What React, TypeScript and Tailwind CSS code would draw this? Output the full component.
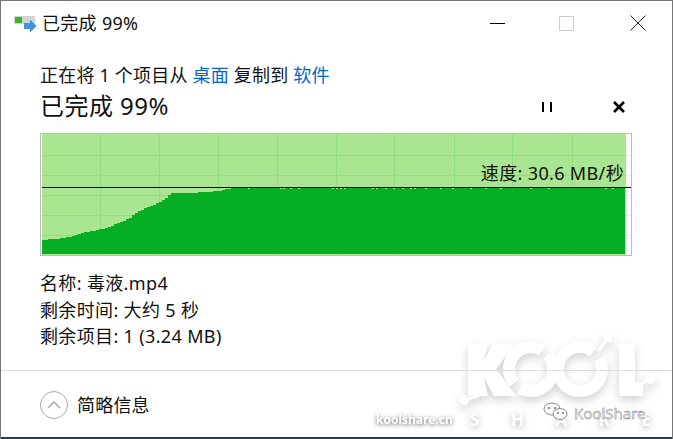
import React from 'react'

const font = { fontFamily: '"Noto Sans", "Noto Sans CJK SC", sans-serif' }

const curve = [
  [42, 240], [52, 239], [63, 238], [72, 236], [80, 233], [92, 231], [105, 228], [115, 224], [122, 221],
  [130, 217], [135, 213], [140, 210], [150, 206], [160, 201], [166, 197], [170, 193], [190, 193],
  [205, 192], [220, 191], [226, 189], [232, 188], [625, 188],
]

// the graph is drawn in small steps, as the copy dialog does
function stepped() {
  const pts: string[] = []
  for (let x = 42; x < 625; x += 3) {
    let y = 188
    for (let i = 0; i < curve.length - 1; i++) {
      const [x0, y0] = curve[i]
      const [x1, y1] = curve[i + 1]
      if (x >= x0 && x <= x1) y = Math.round(y0 + ((y1 - y0) * (x - x0)) / (x1 - x0))
    }
    pts.push(`${x - 41},${y - 134} ${Math.min(x + 3, 625) - 41},${y - 134}`)
  }
  return pts.join(' ') + ' 584,120 1,120'
}

const notches = [248, 280, 283, 290, 298, 332, 336, 340, 344, 372, 376, 385, 393, 402, 410, 414, 425, 440, 452, 470, 485, 500, 530, 548, 605, 612]

function Chart() {
  const vx = [100, 159, 218, 277, 336, 394, 454, 512, 572]
  const hy = [155, 175, 195, 215, 235]
  return (
    <div className="relative mt-[10px] h-[123px] w-[592px] border border-[#bcbcbc] bg-white">
      <svg width="590" height="121" className="block" shapeRendering="crispEdges">
        <rect x="1" y="0" width="584" height="121" fill="#aae691" />
        {hy.map((y) => (
          <g key={y}>
            <rect x="1" y={y - 134} width="584" height="1" fill="#8fdf7c" />
            <rect x="585" y={y - 134} width="5" height="1" fill="#e6f5e0" />
          </g>
        ))}
        {vx.map((x) => (
          <rect key={x} x={x - 41} y="0" width="1" height="121" fill="#8fdf7c" />
        ))}
        <polygon points={stepped()} fill="#06ae24" />
        {notches.map((x) => (
          <rect key={x} x={x - 41} y="54" width="2" height="1" fill="#aae691" />
        ))}
        <rect x="1" y="53" width="589" height="1" fill="#000" />
      </svg>
      <span className="absolute right-[7px] top-[27px] text-[18px] leading-[24px] tracking-[0.35px] text-[#111]">速度: 30.6 MB/秒</span>
    </div>
  )
}

function Watermark() {
  return (
    <>
      <svg width="673" height="439" className="absolute left-0 top-0 drop-shadow-[0_4px_5px_rgba(0,0,0,0.18)]">
        <path d="M467 343h20l-6 24 6 28h-20z" fill="#fff" />
        <path d="M492 343h22l-19 25 20 27h-22l-15-27z" fill="#fff" />
        <path d="M478 395l-15 4" stroke="#fff" strokeWidth="3" />
        <circle cx="463" cy="399" r="5" fill="#fff" />
        <circle cx="530" cy="368" r="22" fill="none" stroke="#fff" strokeWidth="12" strokeDasharray="61 8" transform="rotate(-40 530 368)" />
        <circle cx="579" cy="368" r="22" fill="none" stroke="#fff" strokeWidth="12" strokeDasharray="128 10" transform="rotate(-28 579 368)" />
        <path d="M597 350l10-13" stroke="#fff" strokeWidth="3" />
        <circle cx="607" cy="337" r="5" fill="#fff" />
        <path d="M618 343h16v38h8v14h-24z" fill="#fff" />
        <path d="M642 382l8-4" stroke="#fff" strokeWidth="3" />
        <circle cx="650" cy="378" r="5" fill="#fff" />
      </svg>
      <div className="absolute left-0 top-0 h-full w-full text-white">
        <span className="absolute left-[375px] top-[412px] text-[12px] font-bold leading-[14px] drop-shadow-[0_1px_2px_rgba(0,0,0,0.6)]">koolshare.cn</span>
        <div className="absolute left-[469px] top-[412px] flex w-[181px] justify-between text-[17px] font-bold leading-[13px] drop-shadow-[0_2px_3px_rgba(0,0,0,0.3)]">
          <span>S</span>
          <span>H</span>
          <span>A</span>
          <span>R</span>
          <span>E</span>
        </div>
        <svg width="26" height="20" className="absolute left-[542px] top-[401px]" fill="#fff" stroke="#888" strokeWidth="1">
          <ellipse cx="9" cy="7" rx="8" ry="6" />
          <ellipse cx="17" cy="12" rx="7" ry="5.5" />
          <circle cx="6" cy="6" r="0.8" fill="#666" />
          <circle cx="12" cy="6" r="0.8" fill="#666" />
          <circle cx="15" cy="11" r="0.7" fill="#666" />
          <circle cx="20" cy="11" r="0.7" fill="#666" />
        </svg>
        <span className="absolute left-[573px] top-[402px] text-[15px] leading-[20px] text-[#f4f4f4] [-webkit-text-stroke:0.35px_#555]">KoolShare</span>
      </div>
    </>
  )
}

export default function App() {
  return (
    <div style={font} className="relative flex h-[439px] w-[673px] flex-col overflow-hidden border-t border-l border-r border-[#777] bg-white text-[#111]">
      <div className="flex h-[44px] shrink-0 items-center">
        <svg width="24" height="20" viewBox="0 0 24 20" className="ml-[12px]" shapeRendering="crispEdges">
          <rect x="1" y="3" width="21" height="8" fill="#d4d4d4" />
          <rect x="2" y="4" width="7" height="6" fill="#37b52f" />
          <path d="M11 10h6V7l6 6-6 6v-3h-6z" fill="#3f94e2" />
        </svg>
        <span className="ml-[5px] text-[18px] leading-none tracking-[0.3px]">已完成 99%</span>
        <div className="ml-auto flex items-center">
          <div className="mr-[54px] h-px w-[15px] bg-black" />
          <div className="mr-[56px] h-[15px] w-[15px] border border-[#ccc]" />
          <svg width="16" height="16" className="mr-[26px]" stroke="#222" strokeWidth="1">
            <path d="M.5.5l15 15M15.5.5l-15 15" />
          </svg>
        </div>
      </div>

      <div className="flex flex-1 flex-col pl-[39px]">
        <p className="mt-[18px] text-[18px] leading-[24px] tracking-[0.2px]">
          正在将 1 个项目从 <span className="text-[#0066cc]">桌面</span> 复制到 <span className="text-[#0066cc]">软件</span>
        </p>
        <div className="mt-[2px] flex h-[34px] items-center">
          <span className="w-[500px] text-[24px] leading-none tracking-[0.45px]">已完成 99%</span>
          <svg width="12" height="12" className="mt-[2px] ml-[1px]" shapeRendering="crispEdges">
            <rect x="1" y="1" width="2" height="10" fill="#000" />
            <rect x="9" y="1" width="2" height="10" fill="#000" />
          </svg>
          <svg width="14" height="14" className="mt-[2px] ml-[59px]" stroke="#000" strokeWidth="2.6">
            <path d="M2 2l10 10M12 2L2 12" />
          </svg>
        </div>
        <Chart />
        <div className="mt-[14px] text-[18px] leading-[26.5px] tracking-[0.35px]">
          <p>名称: 毒液.mp4</p>
          <p>剩余时间: 大约 5 秒</p>
          <p>剩余项目: 1 (3.24 MB)</p>
        </div>
      </div>

      <Watermark />

      <div className="relative z-10 flex h-[69px] shrink-0 items-center border-t border-[#dfdfdf] pl-[39px]">
        <div className="flex h-[28px] w-[28px] items-center justify-center rounded-full border border-[#aaa]">
          <svg width="14" height="8" fill="none" stroke="#aaa" strokeWidth="1.5">
            <path d="M1 7l6-6 6 6" />
          </svg>
        </div>
        <span className="ml-[9px] text-[18px] tracking-[0.2px]">简略信息</span>
      </div>

      <div className="absolute bottom-0 left-0 z-20 h-[2px] w-full bg-[#21404a]" />
      <div className="absolute bottom-0 left-[-1px] z-20 h-[144px] w-px bg-[#21404a]" />
      <div className="absolute bottom-0 right-[-1px] z-20 h-[144px] w-px bg-[#21404a]" />
    </div>
  )
}
